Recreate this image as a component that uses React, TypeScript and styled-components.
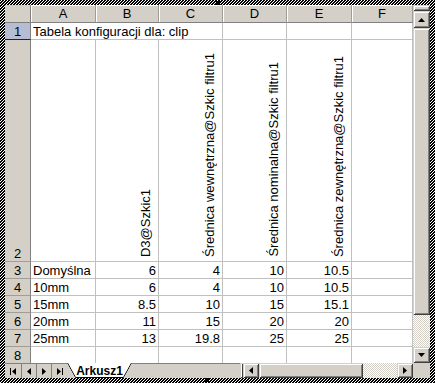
import React from 'react';
import styled, { createGlobalStyle, css } from 'styled-components';

const FACE = '#d4d0c8';

const GlobalStyle = createGlobalStyle`
  html, body {
    margin: 0;
    padding: 0;
    background: #fff;
  }
  body {
    font-family: "Liberation Sans", Arial, sans-serif;
  }
`;

const raised = css`
  background: ${FACE};
  box-shadow: inset 1px 1px ${FACE}, inset -1px -1px #404040, inset 2px 2px #fff,
    inset -2px -2px #808080;
`;

const dither = css`
  background: repeating-conic-gradient(#fff 0 25%, ${FACE} 0 50%) 0 0 / 2px 2px;
`;

// hatched border of the embedded object
const Frame = styled.div`
  position: relative;
  width: 435px;
  height: 383px;
  box-sizing: border-box;
  padding: 5px;
  background: linear-gradient(
      135deg,
      #000 0 30%,
      #fff 30% 50%,
      #000 50% 80%,
      #fff 80% 100%
    )
    0 0 / 3px 3px;
`;

const Handle = styled.div<{ $edge: 'top' | 'bottom'; $x: number }>`
  position: absolute;
  left: ${(p) => p.$x}px;
  ${(p) => (p.$edge === 'top' ? 'top: 1px;' : 'bottom: 1px;')}
  width: 4px;
  height: 4px;
  background: #000;
`;

const Workbook = styled.div`
  display: flex;
  flex-direction: column;
  width: 100%;
  height: 100%;
  background: #fff;
  overflow: hidden;
`;

const Main = styled.div`
  display: flex;
  height: 358px;
  flex-shrink: 0;
`;

const Sheet = styled.div`
  flex: 1;
  display: grid;
  grid-template-columns: 26px 65px 63px 64px 64px 65px 61px;
  grid-template-rows: 18px 17px 222px repeat(6, 17px);
  overflow: hidden;
  font-size: 13px;
  color: #000;
`;

const Corner = styled.div`
  background: ${FACE};
  border-right: 1px solid #808080;
  border-bottom: 1px solid #808080;
  box-sizing: border-box;
`;

const ColHead = styled.div`
  box-sizing: border-box;
  background: ${FACE};
  border-right: 1px solid #a09d96;
  border-bottom: 1px solid #808080;
  box-shadow: inset 1px 1px #fff;
  display: flex;
  align-items: center;
  justify-content: center;
  line-height: 15px;
`;

const RowHead = styled.div<{ $selected?: boolean }>`
  box-sizing: border-box;
  background: ${(p) => (p.$selected ? '#b6bdd2' : FACE)};
  border-right: 1px solid #808080;
  border-bottom: 1px solid ${(p) => (p.$selected ? '#0a246a' : '#a09d96')};
  display: flex;
  align-items: flex-end;
  justify-content: center;
  line-height: 15px;
`;

const Cell = styled.div<{ $align?: 'left' | 'right'; $span?: number }>`
  box-sizing: border-box;
  border-right: 1px solid #c0c0c0;
  border-bottom: 1px solid #c0c0c0;
  display: flex;
  align-items: flex-end;
  justify-content: ${(p) => (p.$align === 'right' ? 'flex-end' : 'flex-start')};
  padding: 0 2px;
  line-height: 15px;
  white-space: nowrap;
  ${(p) => (p.$span ? `grid-column: span ${p.$span};` : '')}
`;

const VertCell = styled(Cell)`
  justify-content: flex-end;
  padding: 0 5px 4px 0;
`;

const VertText = styled.span`
  writing-mode: vertical-rl;
  transform: rotate(180deg);
  line-height: 15px;
`;

// vertical scrollbar
const VScroll = styled.div`
  width: 17px;
  display: flex;
  flex-direction: column;
  background: ${FACE};
`;

const SplitBox = styled.div<{ $vertical?: boolean }>`
  ${raised};
  ${(p) => (p.$vertical ? 'width: 3px;' : 'height: 6px;')}
  flex-shrink: 0;
`;

const ScrollBtn = styled.div<{ $size: number; $vertical?: boolean }>`
  ${raised};
  ${(p) => (p.$vertical ? `height: ${p.$size}px;` : `width: ${p.$size}px;`)}
  flex-shrink: 0;
  display: flex;
  align-items: center;
  justify-content: center;
`;

const Thumb = styled.div<{ $grow?: boolean; $size?: number }>`
  ${raised};
  ${(p) => (p.$grow ? 'flex: 1;' : `flex: 0 0 ${p.$size}px;`)}
`;

const Track = styled.div<{ $grow?: boolean; $size?: number }>`
  ${dither};
  ${(p) => (p.$grow ? 'flex: 1;' : `flex: 0 0 ${p.$size}px;`)}
`;

// bottom strip: sheet tabs + horizontal scrollbar
const BottomBar = styled.div`
  display: flex;
  height: 15px;
  flex-shrink: 0;
  background: ${FACE};
`;

const NavGroup = styled.div`
  display: flex;
  width: 62px;
  border-top: 1px solid #808080;
  box-sizing: border-box;
`;

const NavBtn = styled.div<{ $w: number }>`
  width: ${(p) => p.$w}px;
  display: flex;
  align-items: center;
  justify-content: center;
  border-right: 1px solid #808080;
  box-sizing: border-box;
  &:last-child {
    border-right: none;
  }
`;

const TabStrip = styled.div`
  flex: 1;
  display: flex;
  border-top: 1px solid #808080;
  box-sizing: border-box;
`;

const Tab = styled.div`
  position: relative;
  width: 65px;
  height: 15px;
  margin-top: -1px;
  display: flex;
  align-items: center;
  justify-content: center;
  font-size: 12px;
  font-weight: bold;
  background: #fff;
  clip-path: polygon(0 0, 100% 0, calc(100% - 8px) 100%, 8px 100%);
  svg {
    position: absolute;
    inset: 0;
  }
  span {
    position: relative;
  }
`;

const HScroll = styled.div`
  display: flex;
  width: 170px;
`;

const CornerBox = styled.div`
  width: 17px;
  background: ${FACE};
`;

type Dir = 'up' | 'down' | 'left' | 'right';

const Arrow = ({ dir }: { dir: Dir }) => {
  const vertical = dir === 'up' || dir === 'down';
  const w = vertical ? 7 : 4;
  const h = vertical ? 4 : 7;
  const pts: Record<Dir, string> = {
    up: '3.5,0 7,4 0,4',
    down: '0,0 7,0 3.5,4',
    left: '4,0 4,7 0,3.5',
    right: '0,0 4,3.5 0,7',
  };
  return (
    <svg width={w} height={h} viewBox={`0 0 ${w} ${h}`}>
      <polygon points={pts[dir]} fill="#000" />
    </svg>
  );
};

const EndArrow = ({ dir }: { dir: 'first' | 'last' }) => (
  <svg width={6} height={7} viewBox="0 0 6 7">
    {dir === 'first' ? (
      <>
        <rect x={0} y={0} width={1} height={7} fill="#000" />
        <polygon points="6,0 6,7 2,3.5" fill="#000" />
      </>
    ) : (
      <>
        <polygon points="0,0 4,3.5 0,7" fill="#000" />
        <rect x={5} y={0} width={1} height={7} fill="#000" />
      </>
    )}
  </svg>
);

const columns = ['A', 'B', 'C', 'D', 'E', 'F'];

const headers = [
  'D3@Szkic1',
  'Średnica wewnętrzna@Szkic filtru1',
  'Średnica nominalna@Szkic filtru1',
  'Średnica zewnętrzna@Szkic filtru1',
];

const rows: [string, string, string, string, string][] = [
  ['Domyślna', '6', '4', '10', '10.5'],
  ['10mm', '6', '4', '10', '10.5'],
  ['15mm', '8.5', '10', '15', '15.1'],
  ['20mm', '11', '15', '20', '20'],
  ['25mm', '13', '19.8', '25', '25'],
];

const App: React.FC = () => {
  return (
    <>
      <GlobalStyle />
      <Frame>
        <Handle $edge="top" $x={216} />
        <Handle $edge="bottom" $x={205} />
        <Workbook>
          <Main>
            <Sheet>
              <Corner />
              {columns.map((c) => (
                <ColHead key={c}>{c}</ColHead>
              ))}

              <RowHead $selected>1</RowHead>
              <Cell $span={3}>Tabela konfiguracji dla: clip</Cell>
              <Cell />
              <Cell />
              <Cell />

              <RowHead>2</RowHead>
              <Cell />
              {headers.map((h) => (
                <VertCell key={h}>
                  <VertText>{h}</VertText>
                </VertCell>
              ))}
              <Cell />

              {rows.map((r, i) => (
                <React.Fragment key={r[0]}>
                  <RowHead>{i + 3}</RowHead>
                  <Cell>{r[0]}</Cell>
                  {r.slice(1).map((v, j) => (
                    <Cell key={j} $align="right">
                      {v}
                    </Cell>
                  ))}
                  <Cell />
                </React.Fragment>
              ))}

              <RowHead>8</RowHead>
              {columns.map((c) => (
                <Cell key={c} />
              ))}
            </Sheet>

            <VScroll>
              <SplitBox />
              <ScrollBtn $vertical $size={17}>
                <Arrow dir="up" />
              </ScrollBtn>
              <Thumb $grow />
              <Track $size={32} />
              <ScrollBtn $vertical $size={16}>
                <Arrow dir="down" />
              </ScrollBtn>
            </VScroll>
          </Main>

          <BottomBar>
            <NavGroup>
              <NavBtn $w={17}>
                <EndArrow dir="first" />
              </NavBtn>
              <NavBtn $w={15}>
                <Arrow dir="left" />
              </NavBtn>
              <NavBtn $w={15}>
                <Arrow dir="right" />
              </NavBtn>
              <NavBtn $w={15}>
                <EndArrow dir="last" />
              </NavBtn>
            </NavGroup>
            <TabStrip>
              <Tab>
                <svg width="65" height="15" viewBox="0 0 65 15">
                  <polyline
                    points="0.5,0 8.5,14.5 56.5,14.5 64.5,0"
                    fill="none"
                    stroke="#000"
                    strokeWidth="1"
                  />
                </svg>
                <span>Arkusz1</span>
              </Tab>
            </TabStrip>
            <SplitBox $vertical />
            <HScroll>
              <ScrollBtn $size={16}>
                <Arrow dir="left" />
              </ScrollBtn>
              <Thumb $size={104} />
              <Track $grow />
              <ScrollBtn $size={16}>
                <Arrow dir="right" />
              </ScrollBtn>
            </HScroll>
            <CornerBox />
          </BottomBar>
        </Workbook>
      </Frame>
    </>
  );
};

export default App;
